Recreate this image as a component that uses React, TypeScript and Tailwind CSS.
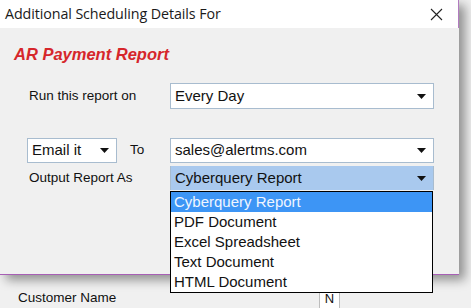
import React from "react";

const Arrow = () => (
  <svg width="9" height="5" viewBox="0 0 9 5" className="shrink-0">
    <path d="M0 0h9L4.5 5z" fill="#111" />
  </svg>
);

const options = ["Cyberquery Report", "PDF Document", "Excel Spreadsheet", "Text Document", "HTML Document"];

export default function App() {
  return (
    <div className="relative w-[471px] h-[308px] overflow-hidden bg-[#f0f0f0] font-['Liberation_Sans',Arial,sans-serif] text-[#111]">
      {/* dialog */}
      <div className="w-[459px] h-[275px] bg-[#f0f0f0] border-b border-[#a75fb5] shadow-[6px_5px_10px_rgba(0,0,0,0.4)]">
        <div className="h-[28px] bg-white border-r border-[#b27bc0] flex items-center justify-between pl-[5px] pr-[15px]">
          <span className="font-['Open_Sans','Noto_Sans',sans-serif] text-[14.3px] text-[#1a1a1a] tracking-[-0.1px]">
            Additional Scheduling Details For
          </span>
          <svg width="13" height="13" viewBox="0 0 13 13">
            <path d="M1 1L12 12M12 1L1 12" stroke="#222" strokeWidth="1.1" />
          </svg>
        </div>

        <div className="pl-[14px] pt-[16px] text-[16.5px] font-bold italic text-[#d6262b] leading-[20px]">
          AR Payment Report
        </div>

        <div className="mt-[19px] flex items-center h-[26px]">
          <span className="w-[170px] pl-[29px] text-[13.5px]">Run this report on</span>
          <div className="w-[264px] h-[26px] bg-white border border-[#a8bccf] flex items-center justify-between pl-[4px] pr-[7px] text-[15px]">
            Every Day
            <Arrow />
          </div>
        </div>

        <div className="mt-[29px] flex items-center h-[25px]">
          <div className="ml-[27px] w-[90px] h-[25px] bg-white border border-[#a8bccf] flex items-center justify-between pl-[4px] pr-[7px] text-[15px]">
            Email it
            <Arrow />
          </div>
          <span className="ml-[13px] w-[40px] text-[13.5px]">To</span>
          <div className="w-[264px] h-[25px] bg-white border border-[#a8bccf] flex items-center justify-between pl-[4px] pr-[7px] text-[15px]">
            sales@alertms.com
            <Arrow />
          </div>
        </div>

        <div className="mt-[3px] flex items-center h-[24px]">
          <span className="w-[170px] pl-[29px] text-[13.5px]">Output Report As</span>
          <div className="relative w-[264px] h-[24px] bg-[#a9c9ee] border-x border-[#a8bccf] flex items-center justify-between pl-[4px] pr-[7px] text-[15px]">
            Cyberquery Report
            <Arrow />
            <div className="absolute left-[-1px] top-[25px] w-[263px] bg-white border border-black z-10">
              {options.map((o, i) => (
                <div
                  key={o}
                  className={`h-[20px] flex items-center pl-[3px] text-[15px] ${i === 0 ? "bg-[#3d95f5] text-[#f0f6ff]" : ""}`}
                >
                  {o}
                </div>
              ))}
            </div>
          </div>
        </div>
      </div>

      {/* underlying window */}
      <div className="mt-[13px] flex items-center h-[20px]">
        <span className="pl-[18px] w-[319px] text-[13.5px]">Customer Name</span>
        <div className="w-[21px] h-[22px] bg-white border border-[#bdbdbd] text-[13px] flex justify-center pt-[1px]">N</div>
      </div>
    </div>
  );
}
